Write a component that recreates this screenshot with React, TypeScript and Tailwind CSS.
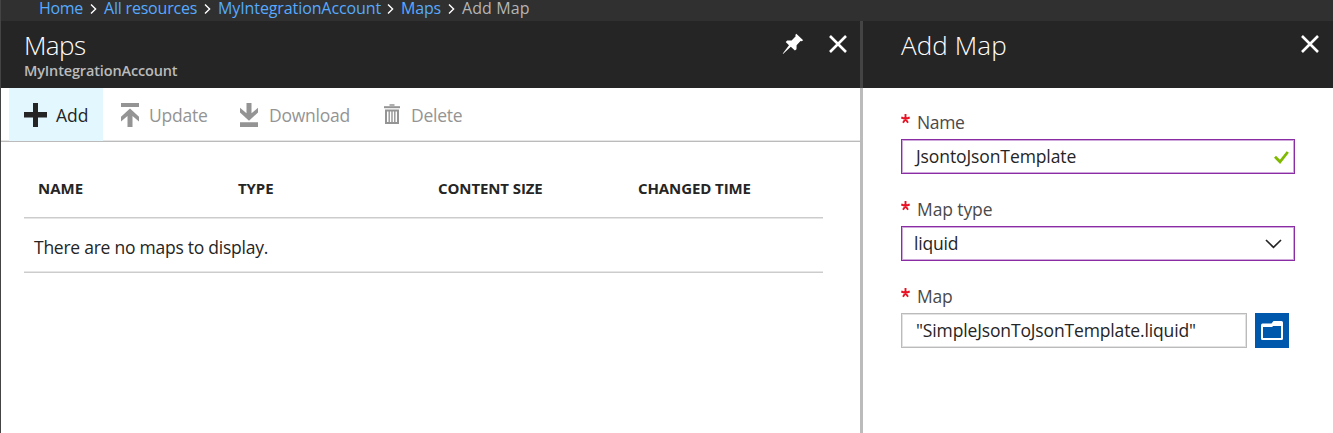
import type { ReactNode } from "react";

const crumbs = [
  { label: "Home", style: "w-[44px] tracking-[-0.3px]" },
  { label: "All resources", style: "w-[93px] tracking-[-0.2px]" },
  { label: "MyIntegrationAccount", style: "w-[162px] tracking-[-0.1px]" },
  { label: "Maps", style: "w-[40px] tracking-[-0.2px]" },
];

const columns = [
  { label: "NAME", style: "tracking-[0px]" },
  { label: "TYPE", style: "tracking-[-0.1px]" },
  { label: "CONTENT SIZE", style: "tracking-[-0.1px]" },
  { label: "CHANGED TIME", style: "tracking-[-0.1px]" },
];

function CloseIcon() {
  return (
    <svg width="18" height="18" viewBox="0 0 18 18" fill="none" stroke="#fff" strokeWidth="2.6">
      <path d="M1 1 17 17M17 1 1 17" />
    </svg>
  );
}

function PinIcon() {
  return (
    <svg width="22" height="22" viewBox="0 0 22 22" fill="#fff">
      <path d="M14.3 0.8 21.2 7.3 19.6 8.3 18.5 8 14.6 12.2 14.5 16.2 12.9 17.6 8.8 13.8 1 20.9 0.8 20.6 7 12.2 3.7 9 5.2 7.5 9.6 7.4 13.7 3.3 13.3 1.9Z" />
    </svg>
  );
}

function PlusIcon() {
  return (
    <svg width="24" height="24" viewBox="0 0 24 24" fill="#252525">
      <path d="M9 0h5v9h9v5.500H14V24H9v-9.500H0V9h9z" />
    </svg>
  );
}

function UploadIcon() {
  return (
    <svg width="20" height="24" viewBox="0 0 20 24" fill="#949494">
      <path d="M1 0h18v4H1zM10 5.500 19 13.800V18.500L12.500 13V24H7.500V13L1 18.500V13.800z" />
    </svg>
  );
}

function DownloadIcon() {
  return (
    <svg width="20" height="24" viewBox="0 0 20 24" fill="#949494">
      <path d="M1 19.300h18V24H1zM10 17.800 19 9.500V4.700L12.500 10.300V0H7.500V10.300L1 4.700V9.500z" />
    </svg>
  );
}

function TrashIcon() {
  return (
    <svg width="16" height="21" viewBox="0 0 16 21" fill="none" stroke="#949494">
      <path d="M5.500 1h5" strokeWidth="1.500" />
      <path d="M0 3.200h16" strokeWidth="2" />
      <path d="M2 6.500V19H14V6.500z" strokeWidth="2" />
      <path d="M5.200 7V18M8 7V18M10.800 7V18" strokeWidth="1.400" />
    </svg>
  );
}

function Required({ children }: { children: ReactNode }) {
  return (
    <div className="mb-[5px] flex h-6 leading-6 text-[#4a4a4a]">
      <svg className="mt-1 mr-[7px]" width="9" height="10" viewBox="0 0 9 10" fill="none" stroke="#e81123" strokeWidth="1.900">
        <path d="M4.500 0V5M0.300 3.500 4.500 5 8.700 3.500M2 8.700 4.500 5 7 8.700" />
      </svg>
      {children}
    </div>
  );
}

export default function App() {
  return (
    <div className="flex h-[433px] w-full flex-col border-l border-[#444] bg-white font-['Open_Sans','Noto_Sans',sans-serif] text-[17.5px] whitespace-nowrap text-[#252525]">
      <nav className="flex h-[21px] shrink-0 bg-[#303030] pl-[38px] text-[16px] leading-4 text-[#56aaff]">
        {crumbs.map((c) => (
          <div key={c.label} className="flex">
            <a className={c.style}>{c.label}</a>
            <svg className="mx-[7px] mt-1" width="7" height="10" viewBox="0 0 7 10" fill="none" stroke="#fff" strokeWidth="1.400">
              <path d="M1 0.500 5.600 5 1 9.500" />
            </svg>
          </div>
        ))}
        <span className="tracking-[0.1px] text-[#b5b5b5]">Add Map</span>
      </nav>

      <div className="flex grow">
        <section className="flex w-[859px] flex-col">
          <header className="flex h-[67px] justify-between bg-[#252525] pr-[13px] pl-[23px]">
            <div>
              <h1 className="mt-1 text-[26px] leading-10 font-light tracking-[-0.6px] text-white">Maps</h1>
              <h2 className="-mt-1 text-[14.5px] leading-5 font-semibold tracking-[-0.15px] text-[#bbb]">MyIntegrationAccount</h2>
            </div>
            <div className="flex gap-[25px] pt-[12px]">
              <PinIcon />
              <div className="pt-[2px]">
                <CloseIcon />
              </div>
            </div>
          </header>

          <div className="flex h-[54px] border-b border-[#bbb] pl-2 text-[#949494] shadow-[inset_0_-1px_0_#e6e6e6]">
            <button className="flex w-[94px] items-center bg-[#e3f7ff] pl-[15px] text-[#252525]">
              <PlusIcon />
              <span className="mt-[2px] ml-[8px] tracking-[0px]">Add</span>
            </button>
            <button className="flex w-[119px] items-center pl-[17px]">
              <UploadIcon />
              <span className="mt-[2px] ml-[9px] tracking-[-0.23px]">Update</span>
            </button>
            <button className="flex w-[144px] items-center pl-[17px]">
              <DownloadIcon />
              <span className="mt-[2px] ml-[10px] tracking-[-0.25px]">Download</span>
            </button>
            <button className="flex items-center pl-[18px]">
              <TrashIcon />
              <span className="mt-[2px] ml-[11px] tracking-[-0.25px]">Delete</span>
            </button>
          </div>

          <div className="ml-[23px] w-[799px]">
            <div className="flex h-[76px] items-center border-b border-[#ccc] pt-[17px] pl-[14px] text-[15px] font-bold">
              {columns.map((c) => (
                <div key={c.label} className="w-[200px] shrink-0">
                  <span className={c.style}>{c.label}</span>
                </div>
              ))}
            </div>
            <div className="flex h-[55px] items-center border-b border-[#ccc] pt-[4px] pl-[10px] shadow-[inset_0_1px_0_#e6e6e6,inset_0_-1px_0_#e6e6e6]">
              <span className="tracking-[-0.25px]">There are no maps to display.</span>
            </div>
          </div>
        </section>

        <div className="flex w-[3px] flex-col bg-[#bbb]">
          <div className="h-[67px] bg-[#444]" />
        </div>

        <section className="flex grow flex-col">
          <header className="flex h-[67px] justify-between bg-[#252525] pr-[14px] pl-[38px]">
            <h1 className="mt-1 text-[26px] leading-10 font-light tracking-[0.1px] text-white">Add Map</h1>
            <div className="pt-[14px]">
              <CloseIcon />
            </div>
          </header>
          <form className="flex w-[432px] flex-col gap-[23px] pt-[22px] pl-[38px]">
            <div>
              <Required>
                <span className="tracking-[-0.35px]">Name</span>
              </Required>
              <div className="flex h-[35px] items-center justify-between border border-[#8a2da5] pr-[5px] pl-[14px] shadow-[inset_0_0_0_1px_#cfa9db]">
                <span className="tracking-[-0.1px]">JsontoJsonTemplate</span>
                <svg className="mt-[2px]" width="15" height="13" viewBox="0 0 15 13" fill="none" stroke="#7fba00" strokeWidth="2.800">
                  <path d="M1 5.800 6 10.800 13.800 1" />
                </svg>
              </div>
            </div>
            <div>
              <Required>
                <span className="tracking-[-0.1px]">Map type</span>
              </Required>
              <div className="flex h-[35px] items-center justify-between border border-[#8a2da5] pr-[12px] pl-[12px] shadow-[inset_0_0_0_1px_#cfa9db]">
                <span className="tracking-[-0.2px]">liquid</span>
                <svg className="mt-[1px]" width="17" height="10" viewBox="0 0 17 10" fill="none" stroke="#252525" strokeWidth="1.700">
                  <path d="M1 1 8.500 8.400 16 1" />
                </svg>
              </div>
            </div>
            <div>
              <Required>
                <span className="tracking-[-0.2px]">Map</span>
              </Required>
              <div className="flex gap-2">
                <div className="flex h-[35px] w-[346px] items-center border border-[#bbb] pl-[14px] shadow-[inset_0_0_0_1px_#e3e3e3]">
                  <span className="tracking-[-0.14px]">"SimpleJsonToJsonTemplate.liquid"</span>
                </div>
                <button type="button" className="flex h-[35px] w-[34px] items-center justify-center bg-[#0058ad]">
                  <svg width="22" height="19" viewBox="0 0 22 19" fill="#fff">
                    <path fillRule="evenodd" d="M0 4.500Q0 2.600 1.500 2.600H10.500L12.500 0H20.500Q22 0 22 1.500V17.500Q22 19 20.500 19H1.500Q0 19 0 17.500zM2 6V17H20V5H12L11.200 6z" />
                  </svg>
                </button>
              </div>
            </div>
          </form>
        </section>
      </div>
    </div>
  );
}
